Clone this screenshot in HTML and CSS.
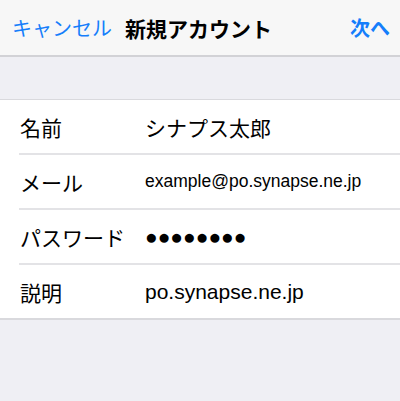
FILE: index.html
```html
<!DOCTYPE html>
<html lang="ja">
<head>
  <meta charset="UTF-8" />
  <title>新規アカウント</title>
  <link rel="stylesheet" href="styles.css">
</head>
<body>
  <div class="navbar">
    <span class="nav-btn">キャンセル</span>
    <span class="nav-title">新規アカウント</span>
    <span class="nav-btn next">次へ</span>
  </div>
  <div class="spacer"></div>
  <ul class="form">
    <li class="row"><span class="label">名前</span><span class="value">シナプス太郎</span></li>
    <li class="row"><span class="label">メール</span><span class="value small">example@po.synapse.ne.jp</span></li>
    <li class="row"><span class="label">パスワード</span><span class="value dots">●●●●●●●●</span></li>
    <li class="row"><span class="label">説明</span><span class="value">po.synapse.ne.jp</span></li>
  </ul>
</body>
</html>
```

FILE: styles.css
```css
body {
  margin: 0;
  background-color: #efeff4;
  font-family: "Liberation Sans", "Noto Sans CJK JP", sans-serif;
  color: #000;
}
.navbar {
  height: 55px;
  background-color: #f7f7f7;
  border-bottom: 2px solid #d2d2d6;
  display: flex;
  align-items: center;
  padding: 0 10px 0 12px;
  font-size: 20px;
}
.nav-btn {
  color: #157efb;
}
.nav-title {
  font-weight: bold;
  font-size: 21px;
  margin-left: 13px;
}
.next {
  margin-left: auto;
  font-weight: bold;
}
.spacer {
  height: 42px;
}
.form {
  list-style: none;
  margin: 0;
  padding: 0 0 0 19px;
  background-color: #fff;
  border-top: 1px solid #d9d9dd;
  border-bottom: 2px solid #d9d9dd;
}
.row {
  height: 53px;
  display: flex;
  align-items: center;
  font-size: 21px;
  border-bottom: 2px solid #e3e3e6;
}
.row:last-child {
  border-bottom: none;
}
.label {
  width: 125px;
  padding-left: 1px;
}
.value.small {
  font-size: 17.5px;
}
.dots {
  font-size: 21px;
}
```
